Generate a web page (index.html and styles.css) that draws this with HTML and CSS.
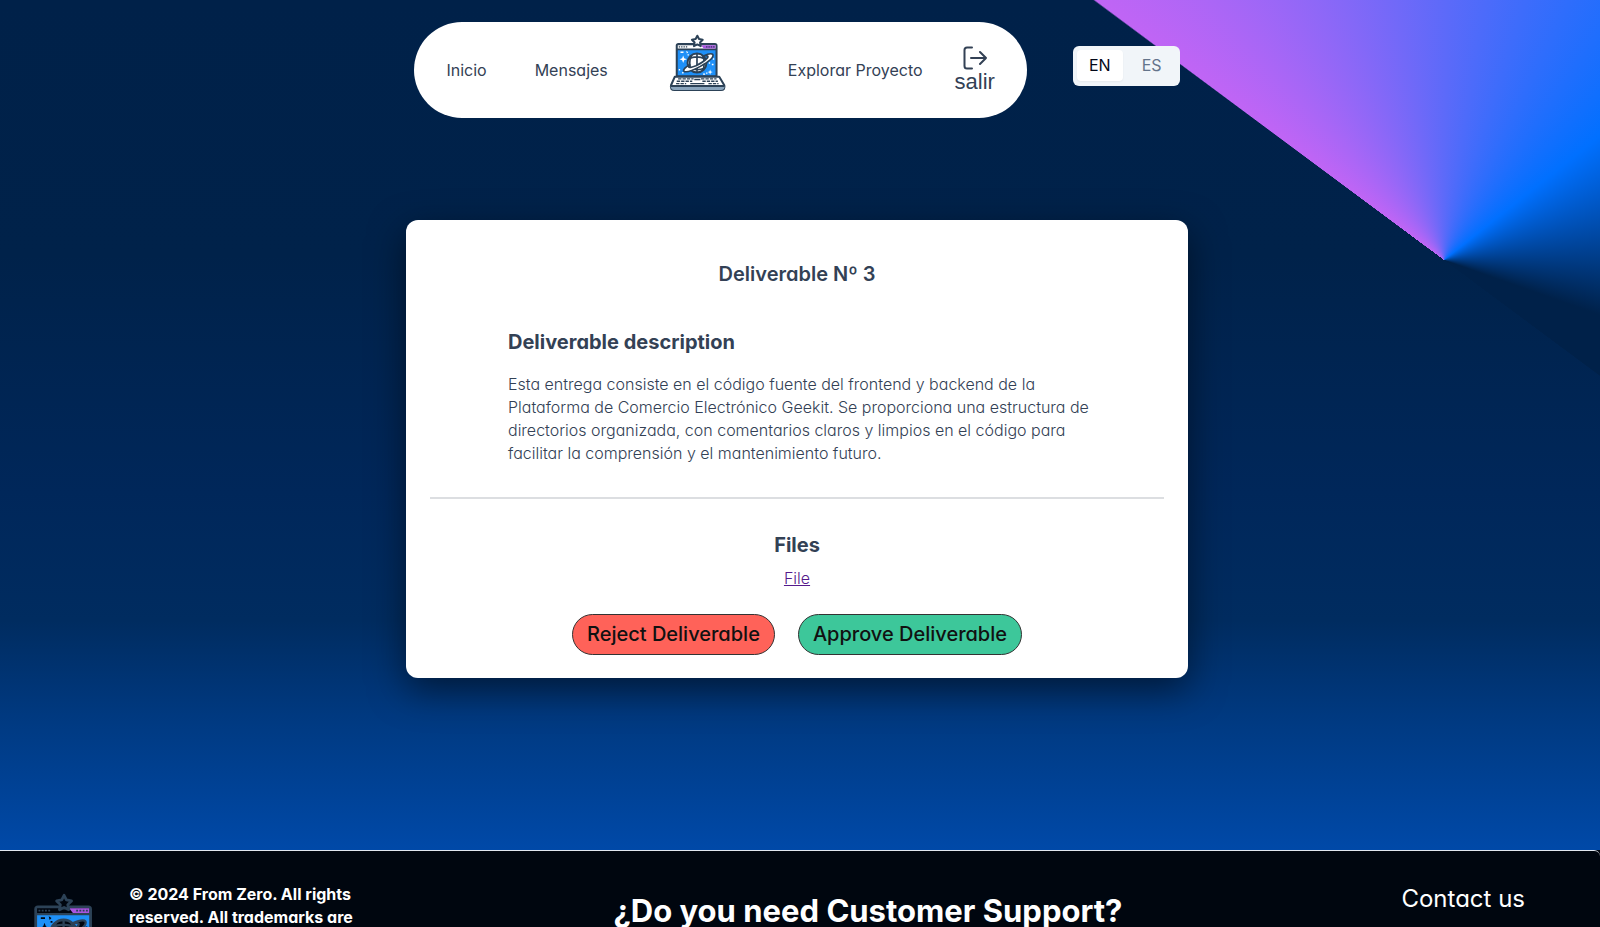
FILE: index.html
```html
<!DOCTYPE html>
<html lang="en">
<head>
<meta charset="utf-8">
<meta name="viewport" content="width=device-width, initial-scale=1">
<title>Deliverable Nº 3</title>
<link rel="stylesheet" href="styles.css">
</head>
<body>
<svg class="sprite" aria-hidden="true">
  <symbol id="laptop" viewBox="34 24 170 172">
    <path class="ink" d="M53 150V59q0-8 8-8h108q8 0 8 8v91z"/>
    <path class="paper" d="M59 57h112v10H59z"/>
    <path fill="#a855e0" d="M128 57h43v10h-35z"/>
    <path class="mark" stroke-width="4" stroke-dasharray="4 3" d="M62 62h27M143 62h25"/>
    <path fill="#1e90f8" d="M59 72h112v74H59z"/>
    <path class="paper" d="M75 88l3 8 8 3-8 3-3 8-3-8-8-3 8-3zM155 129l2 6 6 2-6 2-2 6-2-6-6-2 6-2zM67 76h9v4h-9zM84 74l6 4-4 4zM160 112h5v5h-5zM151 108h4v4h-4zM163 96h4v4h-4zM62 128h4v4h-4zM72 137h4v4h-4zM88 84h4v4h-4zM143 138h4v4h-4zM134 141h6v4h-6z"/>
    <circle class="paper line" cx="116" cy="110" r="28" stroke-width="6"/>
    <path class="line" fill="none" stroke-width="5" d="M99 88q-9 22 0 44M116 82v56M133 88q9 22 0 44M91 98q24-12 49 0M92 124q24 12 48 0"/>
    <path class="paper line" stroke-width="5" d="M95 114q-22 14-18 20 8 8 49-14 42-24 37-35-5-6-28 4 18-3 12 6-12 13-34 23-20 8-22 3z"/>
    <path class="paper line" stroke-width="6" stroke-linejoin="round" d="M50 151h132l15 25q3 14-10 14H49q-13 0-10-14z"/>
    <path class="shade" d="M38 178h160q0 12-11 12H49q-11 0-11-12z"/>
    <path class="line" fill="none" stroke-width="6" d="M38 178h160"/>
    <path class="line" fill="none" stroke-width="4" stroke-dasharray="10 3" d="M60 157h46M128 157h46M56 164h46M132 164h46M54 171h30M150 171h30"/>
    <path class="line" fill="none" stroke-width="4" d="M96 171h42M108 159h18"/>
    <path class="paper line" stroke-width="6" stroke-linejoin="round" d="M117 29l5 10 11 2-8 8 2 11-10-5-10 5 2-11-8-8 11-2z"/>
  </symbol>
</svg>

<div class="page">
  <header class="top">
    <nav class="nav">
      <div class="links links-start">
        <a href="#inicio">Inicio</a>
        <a href="#mensajes">Mensajes</a>
      </div>
      <a class="brand" href="#home" aria-label="From Zero"><svg class="logo"><use href="#laptop"/></svg></a>
      <div class="links links-end">
        <a href="#explorar">Explorar Proyecto</a>
        <button class="logout" type="button">
          <svg class="logout-icon" viewBox="0 0 24 24" aria-hidden="true"><path d="M9 1.500H4Q1.500 1.500 1.500 4v16q0 2.500 2.500 2.500h5M8 12h15M17 6l6 6-6 6"/></svg>
          <span>salir</span>
        </button>
      </div>
    </nav>
    <div class="lang" role="group" aria-label="Language">
      <button class="lang-item is-active" type="button" aria-pressed="true">EN</button>
      <button class="lang-item" type="button" aria-pressed="false">ES</button>
    </div>
  </header>

  <main class="main">
    <article class="card">
      <h1 class="card-title">Deliverable Nº 3</h1>
      <section class="about">
        <h2 class="heading">Deliverable description</h2>
        <p class="text">Esta entrega consiste en el código fuente del frontend y backend de la Plataforma de Comercio Electrónico Geekit. Se proporciona una estructura de directorios organizada, con comentarios claros y limpios en el código para facilitar la comprensión y el mantenimiento futuro.</p>
      </section>
      <hr class="rule">
      <section class="files">
        <h2 class="heading">Files</h2>
        <a class="file" href="#file">File</a>
      </section>
      <div class="actions">
        <button class="action reject" type="button">Reject Deliverable</button>
        <button class="action approve" type="button">Approve Deliverable</button>
      </div>
    </article>
  </main>
</div>

<footer class="footer">
  <div class="legal">
    <svg class="footer-logo" role="img" aria-label="From Zero"><use href="#laptop"/></svg>
    <p class="copyright">© 2024 From Zero. All rights reserved. All trademarks are</p>
  </div>
  <h2 class="support">¿Do you need Customer Support?</h2>
  <a class="contact" href="#contact">Contact us</a>
</footer>
</body>
</html>
```
FILE: styles.css
```css
* { box-sizing: border-box; }

body {
  margin: 0;
  background: #00060f;
  color: #334155;
  font-family: Inter, "Liberation Sans", sans-serif;
  font-feature-settings: "cv11";
  font-size: 16px;
  line-height: 23px;
}

h1, h2, p { margin: 0; }

button {
  font: inherit;
  font-feature-settings: inherit;
  color: inherit;
  cursor: pointer;
}

.sprite { position: absolute; width: 0; height: 0; }

.ink { fill: #2c4257; }
.paper { fill: var(--paper); }
.line, .mark { stroke: #2c4257; }
.shade { fill: #8aa5bd; }

/* Page */
.page {
  --paper: #fff;
  padding: 22px 6px 172px 0;
  background:
    conic-gradient(from 306.5deg at calc(100% - 156px) 260px,
      transparent 0deg, #c065f5 0.2deg, #5c6af9 54deg, #0070ff 105deg,
      #002149 163deg, #002149 180deg, transparent 180.2deg),
    linear-gradient(#002149 0%, #00224a 30%, #00275a 58%, #002c60 73%, #003474 80%, #003a82 85%, #0049a8 100%);
}

.top {
  display: flex;
  justify-content: center;
  gap: 46px;
}

.nav {
  display: flex;
  align-items: center;
  height: 96px;
  padding: 0 32px;
  border-radius: 48px;
  background: #fff;
}

.links { display: flex; align-items: center; }
.links a { color: inherit; text-decoration: none; }
.links-start { gap: 48px; }
.links-end { gap: 32px; }

.brand { align-self: flex-start; margin: 12px 61px 0; }
.logo { display: block; width: 58px; height: 58px; }

.logout {
  display: flex;
  flex-direction: column;
  align-items: center;
  padding: 0;
  border: 0;
  background: none;
  font: 22px/24px "Liberation Sans", Arial, sans-serif;
}

.logout-icon {
  width: 24px;
  height: 24px;
  fill: none;
  stroke: currentColor;
  stroke-width: 2;
  stroke-linecap: round;
  stroke-linejoin: round;
}

.lang {
  display: flex;
  align-self: flex-start;
  height: 40px;
  margin-top: 24px;
  padding: 4px 4px 5px;
  border-radius: 6px;
  background: #f1f5f9;
}

.lang-item {
  padding: 0 12px;
  min-width: 48px;
  border: 0;
  border-radius: 4px;
  background: none;
  color: #64748b;
}

.lang-item.is-active {
  margin-right: 5px;
  background: #fff;
  color: #020817;
  min-width: 45px;
  box-shadow: 0 1px 2px rgba(0, 0, 0, .05);
}

/* Card */
.main { padding-top: 102px; }

.card {
  max-width: 782px;
  margin: 0 auto;
  padding: 42px 24px 23px;
  border-radius: 12px;
  background: #fff;
  box-shadow: 0 12px 36px rgba(0, 0, 0, .5);
}

.card-title {
  font-size: 20px;
  font-weight: 600;
  line-height: 24px;
  text-align: center;
}

.heading {
  font-size: 20px;
  font-weight: 700;
  line-height: 24px;
}

.about { padding: 44px 72px 0 78px; }
.text { margin-top: 19px; font-weight: 300; }

.rule {
  height: 2px;
  margin: 32px 0;
  border: 0;
  background: #dcdee1;
}

.files {
  display: flex;
  flex-direction: column;
  align-items: center;
  gap: 10px;
  padding-top: 2px;
}

.file { color: #551a8b; font-weight: 300; }

.actions {
  display: flex;
  justify-content: center;
  gap: 23px;
  margin-top: 24px;
}

.action {
  height: 41px;
  padding: 0 14px;
  border: 1px solid #333;
  border-radius: 21px;
  color: #111;
  font-size: 20px;
  font-weight: 500;
}

.reject { background: #ff6259; }
.approve { background: #3dc79a; }

/* Footer */
.footer {
  --paper: #00060f;
  display: grid;
  grid-template-columns: 19fr auto 13fr;
  min-height: 140px;
  padding: 32px 75px 32px 25px;
  border-top: 1px solid #e2e8f0;
  border-top-right-radius: 6px;
  background: #00060f;
  color: #fff;
}

.legal { display: flex; align-items: flex-start; gap: 24px; }
.footer-logo { flex: none; width: 80px; height: 80px; margin-top: 10px; }
.copyright { max-width: 232px; font-weight: 700; }
.support { font-size: 31px; font-weight: 700; line-height: 56px; }

.contact {
  justify-self: end;
  color: inherit;
  font-size: 24px;
  line-height: 32px;
  text-decoration: none;
}
```
